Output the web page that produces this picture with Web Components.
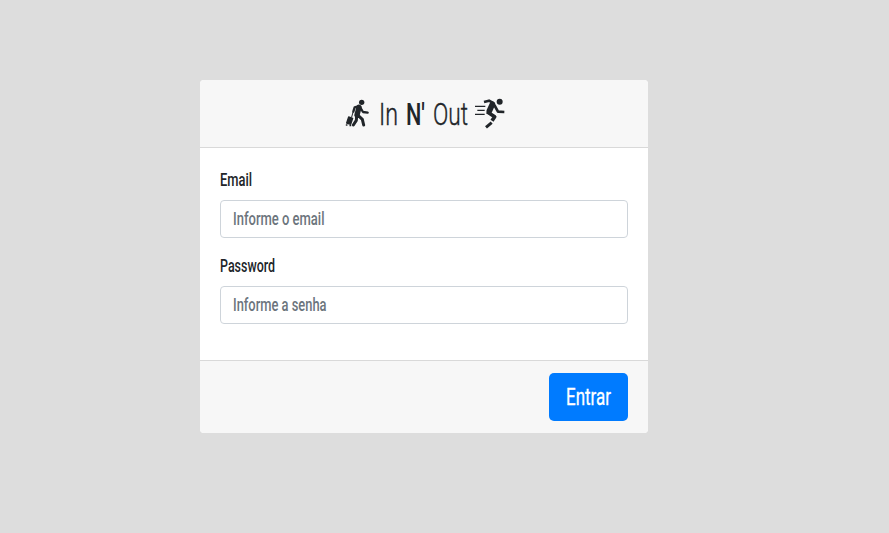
<!DOCTYPE html>
<html lang="pt-br">
<head>
<meta charset="utf-8">
<title>In N' Out</title>
<style>
body{margin:0;background:#ddd;color:#212529;font-family:Roboto,"Open Sans",sans-serif}
</style>
</head>
<body>
<login-page></login-page>
<script>
// Condensed text: scales its glyphs horizontally to the requested width.
class FitText extends HTMLElement {
  connectedCallback() {
    this.attachShadow({mode: 'open'}).innerHTML = `<style>
      :host{display:block;flex:none;height:1.2em;line-height:1.2;white-space:nowrap}
      span{display:inline-block;transform-origin:0 50%}</style><span><slot></slot></span>`;
    const w = +this.getAttribute('width');
    this.style.width = w + 'px';
    const s = this.shadowRoot.querySelector('span');
    s.style.transform = `scaleX(${w / s.getBoundingClientRect().width})`;
  }
}
class BrandTitle extends HTMLElement {
  connectedCallback() {
    this.attachShadow({mode: 'open'}).innerHTML = `<style>
      :host{display:flex;align-items:center;height:67px;padding-left:145px;box-sizing:border-box;font-size:32px;font-weight:300;-webkit-text-stroke:.4px currentColor}
      svg{flex:none;display:block;fill:none;stroke:currentColor;stroke-linecap:round;stroke-linejoin:round}
      .walk{width:25px;height:28px;margin:-2px 9px 0 0}
      .run{width:32px;height:32px;margin:-2px 0 0 6px}
      fit-text{margin-top:2px;margin-right:8px}
      .n{font-weight:500;margin-right:8px;-webkit-text-stroke:0}.out{margin-right:0}
    </style>
    <svg class="walk" viewBox="30 26 75 84">
      <circle cx="80" cy="36" r="8" fill="currentColor" stroke="none"/>
      <path d="M72 51L66 74" stroke-width="16"/>
      <path d="M72 47L59 51L55 64M76 52L84 65L98 67" stroke-width="7"/>
      <path d="M65 76L64 90L55 104M70 76L82 87L86 104" stroke-width="9"/>
      <path d="M54 66L50 80" stroke-width="3"/>
      <path d="M41 80L53 84L47 102L35 98Z" fill="currentColor" stroke-width="4"/>
      <path d="M34 104h2M45 106h2" stroke-width="4"/>
    </svg>
    <fit-text width="19">In</fit-text>
    <fit-text class="n" width="19">N'</fit-text>
    <fit-text class="out" width="35">Out</fit-text>
    <svg class="run" viewBox="148 20 96 96">
      <circle cx="225" cy="34" r="9" fill="currentColor" stroke="none"/>
      <path d="M203 42L194 62" stroke-width="17"/>
      <path d="M178 35L193 31L208 39M209 44L220 64L239 65" stroke-width="8" stroke-linecap="butt"/>
      <path d="M187 64L210 79L202 91" stroke-width="11" stroke-linecap="butt"/>
      <path d="M201 97L184 111" stroke-width="9" stroke-linecap="butt"/>
      <path d="M151 48H182M158 60H180M151 72H180" stroke-width="3.5" stroke-linecap="butt"/>
    </svg>`;
  }
}
class FormField extends HTMLElement {
  connectedCallback() {
    const a = n => this.getAttribute(n);
    this.attachShadow({mode: 'open'}).innerHTML = `<style>
      :host{display:block;height:70px;margin-bottom:16px;font-size:18px}
      label{display:flex;align-items:center;height:24px;margin-bottom:8px;font-weight:500}
      .box{display:grid;align-items:center;height:38px;box-sizing:border-box;border:1px solid #ced4da;border-radius:4px;background:#fff;color:#6c757d;font-weight:500}
      .box>*{grid-area:1/1}
      label fit-text{margin-left:-.5px}
      .box fit-text{margin-left:11.5px;pointer-events:none}
      input{width:100%;height:100%;box-sizing:border-box;border:0;background:none;outline:0;padding:0 12px;font:inherit}
    </style>
    <label><fit-text width="${a('label-width')}">${a('label')}</fit-text></label>
    <div class="box"><input type="${a('type')}" aria-label="${a('label')}"><fit-text width="${a('hint-width')}">${a('hint')}</fit-text></div>`;
  }
}
class SubmitButton extends HTMLElement {
  connectedCallback() {
    this.attachShadow({mode: 'open'}).innerHTML = `<style>
      :host{display:block}
      button{display:flex;align-items:center;justify-content:center;width:79px;height:48px;padding:2px 0 0;border:0;border-radius:5px;background:#007bff;color:#fff;font:400 23px Roboto,sans-serif;-webkit-text-stroke:.3px #fff}
    </style><button><fit-text width="45">${this.textContent}</fit-text></button>`;
  }
}
class LoginPage extends HTMLElement {
  connectedCallback() {
    this.attachShadow({mode: 'open'}).innerHTML = `<style>
      :host{display:block;height:533px;box-sizing:border-box;padding:80px 0 0 200px;overflow:hidden}
      .card{width:448px;height:353px;border-radius:4px;background:#fff;overflow:hidden}
      header{background:#f7f7f7;border-bottom:1px solid #d9d9d9}
      main{height:212px;box-sizing:border-box;padding:20px}
      footer{height:73px;box-sizing:border-box;display:flex;justify-content:flex-end;padding:12px 20px;background:#f7f7f7;border-top:1px solid #d9d9d9}
    </style>
    <div class="card">
      <header><brand-title></brand-title></header>
      <main>
        <form-field type="email" label="Email" label-width="32" hint="Informe o email" hint-width="91.5"></form-field>
        <form-field type="password" label="Password" label-width="55" hint="Informe a senha" hint-width="93.5"></form-field>
      </main>
      <footer><submit-button>Entrar</submit-button></footer>
    </div>`;
  }
}
customElements.define('fit-text', FitText);
customElements.define('brand-title', BrandTitle);
customElements.define('form-field', FormField);
customElements.define('submit-button', SubmitButton);
customElements.define('login-page', LoginPage);
</script>
</body>
</html>
